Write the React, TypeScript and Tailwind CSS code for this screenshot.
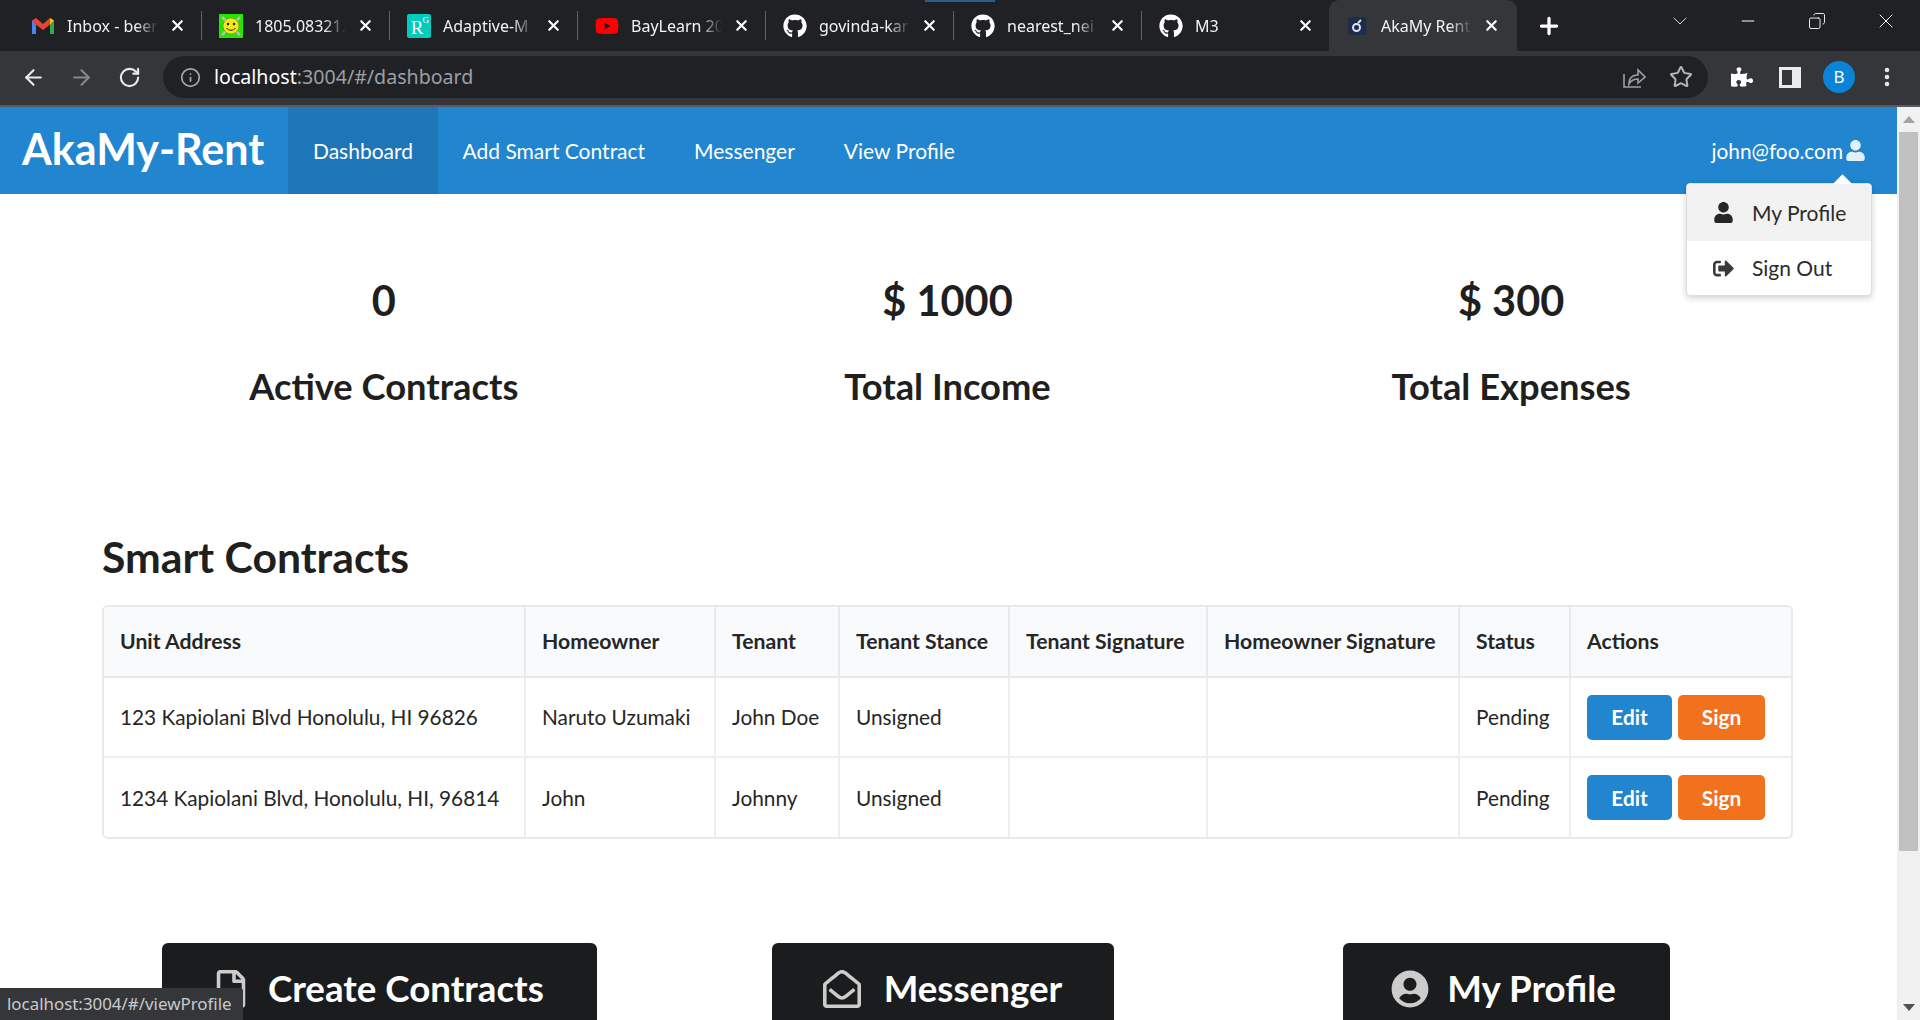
import React from "react";
import { ArrowLeft, ArrowRight, RotateCw, Info, Star, X, Plus, ChevronDown, Minus, Copy, EllipsisVertical } from "lucide-react";
import { FaGithub, FaUser, FaPuzzlePiece, FaSignOutAlt, FaRegFile, FaRegEnvelopeOpen, FaUserCircle, FaYoutube } from "react-icons/fa";

const tabs = [
  { title: "Inbox - beer", icon: "gmail" },
  { title: "1805.08321.", icon: "smiley" },
  { title: "Adaptive-M", icon: "rg" },
  { title: "BayLearn 20", icon: "youtube" },
  { title: "govinda-kar", icon: "github" },
  { title: "nearest_nei", icon: "github" },
  { title: "M3", icon: "github" },
];

const rows = [
  { address: "123 Kapiolani Blvd Honolulu, HI 96826", owner: "Naruto Uzumaki", tenant: "John Doe" },
  { address: "1234 Kapiolani Blvd, Honolulu, HI, 96814", owner: "John", tenant: "Johnny" },
];

const headers = ["Unit Address", "Homeowner", "Tenant", "Tenant Stance", "Tenant Signature", "Homeowner Signature", "Status", "Actions"];

function Favicon({ type }: { type: string }) {
  if (type === "gmail") {
    return (
      <svg width="24" height="24" viewBox="0 0 24 24">
        <path d="M1 6v14h4V10z" fill="#4285f4" />
        <path d="M23 6v14h-4V10z" fill="#34a853" />
        <path d="M1 6.5 5 4l7 6 7-6 4 2.5-4 4-7 5.500-7-5.500z" fill="#ea4335" />
        <path d="M19 4l4 2.500-4 4z" fill="#fbbc04" />
      </svg>
    );
  }
  if (type === "smiley") {
    return (
      <svg width="24" height="24" viewBox="0 0 24 24">
        <rect width="24" height="24" fill="#22e600" />
        <path d="M3 3l18 18M21 3 3 21" stroke="#bbb" strokeWidth="2.500" />
        <circle cx="12" cy="12" r="8" fill="#f4e71d" stroke="#6b6b10" strokeWidth="0.500" />
        <circle cx="9" cy="10" r="1.200" fill="#222" />
        <circle cx="15" cy="10" r="1.200" fill="#222" />
        <path d="M7.500 14c2 3 7 3 9 0" fill="none" stroke="#222" strokeWidth="1" />
      </svg>
    );
  }
  if (type === "rg") {
    return (
      <div className="relative flex h-6 w-6 items-center justify-center rounded-[2px] bg-[#00ccbb] font-['Liberation_Serif',serif] text-[19px] leading-none text-white">
        <span className="mr-1 mt-1">R</span>
        <span className="absolute right-[2px] top-[2px] text-[9px]">G</span>
      </div>
    );
  }
  if (type === "youtube") return <FaYoutube className="text-[26px] text-[#f00]" />;
  if (type === "github") return <FaGithub className="text-[24px] text-white" />;
  return (
    <svg width="18" height="18" viewBox="0 0 18 18">
      <rect width="18" height="18" rx="2" fill="#1c2c4c" />
      <circle cx="8.500" cy="10.500" r="3.500" fill="none" stroke="#dfe4ee" strokeWidth="2" />
      <path d="M10 6l3-3" stroke="#dfe4ee" strokeWidth="2" />
    </svg>
  );
}

function Tab({ title, icon, active }: { title: string; icon: string; active?: boolean }) {
  return (
    <div className={active ? "relative flex h-[51px] w-[188px] shrink-0 items-center rounded-t-[10px] bg-[#35363a] pl-[16px] pr-[17px]" : "relative flex h-[51px] w-[187px] shrink-0 items-center pl-[17px] pr-[15px]"}>
      <div className="flex w-[24px] shrink-0 items-center justify-center">
        <Favicon type={icon} />
      </div>
      <span className="ml-[12px] min-w-0 flex-1 overflow-hidden whitespace-nowrap text-[16px] text-[#f1f3f4] [mask-image:linear-gradient(to_right,black_72%,transparent_96%)]">
        {title}
      </span>
      <X size={17} strokeWidth={3} className="ml-[7px] shrink-0 text-white" />
    </div>
  );
}

function TabSeparator() {
  return <div className="h-[29px] w-px shrink-0 bg-[#5f6368]" />;
}

function BrowserChrome() {
  return (
    <div className="relative shrink-0 font-['Noto_Sans',sans-serif]">
      <div className="absolute left-[925px] top-0 h-[2px] w-[70px] bg-[#2b5f8a]" />
      <div className="flex h-[51px] items-center bg-[#202124] pl-[14px]">
        {tabs.map((t, i) => (
          <React.Fragment key={i}>
            <Tab title={t.title} icon={t.icon} />
            {i < 6 && <TabSeparator />}
          </React.Fragment>
        ))}
        <Tab title="AkaMy Rent" icon="aka" active />
        <Plus size={26} strokeWidth={3} className="ml-[19px] shrink-0 text-white" />
        <div className="flex-1" />
        <ChevronDown size={24} strokeWidth={1} className="mr-[46px] -mt-[10px] shrink-0 text-[#d6d6d6]" />
        <Minus size={20} strokeWidth={1.200} className="mr-[50px] -mt-[10px] shrink-0 text-white" />
        <Copy size={18} strokeWidth={1.200} className="mr-[48px] -mt-[10px] shrink-0 -scale-x-100 text-white" />
        <X size={24} strokeWidth={1} className="mr-[22px] -mt-[10px] shrink-0 text-white" />
      </div>
      <div className="flex h-[56px] items-center border-b-2 border-[#5a5b5e] bg-[#35363a] pb-[2px]">
        <ArrowLeft size={25} strokeWidth={2} className="ml-[21px] shrink-0 text-[#e8eaed]" />
        <ArrowRight size={25} strokeWidth={2} className="ml-[23px] shrink-0 text-[#85888c]" />
        <RotateCw size={23} strokeWidth={2.200} className="ml-[24px] shrink-0 text-[#e8eaed]" />
        <div className="ml-[22px] flex h-[42px] flex-1 items-center rounded-full bg-[#202124] pl-[17px] pr-[15px]">
          <Info size={21} strokeWidth={2} className="shrink-0 text-[#a5a7aa]" />
          <span className="ml-[13px] text-[19.600px] text-white">
            localhost<span className="text-[#9aa0a6]">:3004/#/dashboard</span>
          </span>
          <div className="flex-1" />
          <svg width="24" height="26" viewBox="0 0 24 26" fill="none" stroke="#9aa0a6" strokeWidth="1.600" className="mr-[23px]">
            <path d="M2 10v13h17" />
            <path d="M7 20c0-6 3-9 9-9V6l7 7-7 6v-4c-4 0-7 1.500-9 5z" />
          </svg>
          <Star size={24} strokeWidth={2} className="text-[#b3b5b8]" />
        </div>
        <FaPuzzlePiece className="ml-[23px] shrink-0 text-[22px] text-white" />
        <div className="ml-[26px] flex h-[21px] w-[22px] shrink-0 justify-end border-[3px] border-[#e8eaed]">
          <div className="w-[6px] bg-[#e8eaed]" />
        </div>
        <div className="ml-[22px] flex h-[32px] w-[32px] shrink-0 items-center justify-center rounded-full bg-[#0a84d6] text-[17px] text-white">B</div>
        <EllipsisVertical size={24} strokeWidth={2.500} className="ml-[20px] mr-[21px] shrink-0 text-[#e8eaed]" />
      </div>
    </div>
  );
}

function Navbar() {
  return (
    <div className="flex h-[87px] shrink-0 items-stretch bg-[#2185d0] text-[21px] text-white">
      <div className="flex w-[288px] items-center pb-[2px] pl-[22px] text-[43px] font-bold">AkaMy-Rent</div>
      <div className="flex w-[150px] items-center justify-center bg-[#1e75b8]">Dashboard</div>
      <div className="flex items-center px-[24.500px]">Add Smart Contract</div>
      <div className="flex items-center px-[24.500px]">Messenger</div>
      <div className="flex items-center px-[24.500px]">View Profile</div>
      <div className="flex flex-1 items-center justify-end pr-[31px] text-[20.800px]">
        john@foo.com
        <FaUser className="ml-[2px] text-[21px] text-[#e4f1fa]" />
      </div>
    </div>
  );
}

function ProfileMenu() {
  return (
    <div className="absolute right-[25px] top-[76px] w-[186px] rounded-[4px] border border-[#dedede] bg-white text-[21px] text-[#2b2b2b] shadow-[0_2px_6px_rgba(0,0,0,0.18)]">
      <div className="absolute right-[22px] top-[-7px] h-[13px] w-[13px] rotate-45 bg-white" />
      <div className="relative flex h-[57px] items-center rounded-t-[4px] bg-[#f2f2f2] pl-[26px]">
        <FaUser className="mr-[18px] text-[21px] text-[#262626]" />
        My Profile
      </div>
      <div className="flex h-[54px] items-center pl-[26px]">
        <FaSignOutAlt className="mr-[18px] text-[21px] text-[#3a3a3a]" />
        Sign Out
      </div>
    </div>
  );
}

function Stat({ value, label }: { value: string; label: string }) {
  return (
    <div className="text-center text-[#1f1f1f]">
      <div className="text-[41.500px] font-bold leading-[50px]">{value}</div>
      <div className="mt-[36px] text-[36.300px] font-bold leading-[50px]">{label}</div>
    </div>
  );
}

function ContractsTable() {
  return (
    <div className="mt-[23px] overflow-hidden rounded-[6px] border-2 border-[#e8e9e9]">
      <table className="w-full table-fixed border-collapse text-left text-[20.800px] text-[#262626]">
        <colgroup>
          <col className="w-[421px]" />
          <col className="w-[190px]" />
          <col className="w-[124px]" />
          <col className="w-[170px]" />
          <col className="w-[198px]" />
          <col className="w-[252px]" />
          <col className="w-[111px]" />
          <col />
        </colgroup>
        <thead>
          <tr className="h-[70px] bg-[#f9fafb]">
            {headers.map((h) => (
              <th key={h} className="border-b-2 border-l-2 border-[#e8e9e9] pl-[16px] text-[21.200px] font-bold whitespace-nowrap first:border-l-0">
                {h}
              </th>
            ))}
          </tr>
        </thead>
        <tbody>
          {rows.map((r) => (
            <tr key={r.address} className="h-[80px] border-b-2 border-[#eeeeee] last:border-b-0">
              <td className="pl-[16px] whitespace-nowrap">{r.address}</td>
              <td className="border-l-2 border-[#eeeeee] pl-[16px] whitespace-nowrap">{r.owner}</td>
              <td className="border-l-2 border-[#eeeeee] pl-[16px] whitespace-nowrap">{r.tenant}</td>
              <td className="border-l-2 border-[#eeeeee] pl-[16px]">Unsigned</td>
              <td className="border-l-2 border-[#eeeeee]" />
              <td className="border-l-2 border-[#eeeeee]" />
              <td className="border-l-2 border-[#eeeeee] pl-[16px]">Pending</td>
              <td className="border-l-2 border-[#eeeeee] pl-[16px]">
                <div className="flex gap-[6px]">
                  <button className="h-[45px] w-[85px] rounded-[5px] bg-[#2185d0] font-bold text-white">Edit</button>
                  <button className="h-[45px] w-[87px] rounded-[5px] bg-[#f2711c] font-bold text-white">Sign</button>
                </div>
              </td>
            </tr>
          ))}
        </tbody>
      </table>
    </div>
  );
}

function BigButton({ icon, label, className, iconClass }: { icon: React.ReactNode; label: string; className: string; iconClass: string }) {
  return (
    <div className={`flex h-[92px] items-center rounded-t-[6px] bg-[#1b1c1d] text-[36.700px] font-bold whitespace-nowrap text-white ${className}`}>
      <span className={`text-[38px] text-[#cccccc] ${iconClass}`}>{icon}</span>
      {label}
    </div>
  );
}

function Scrollbar() {
  return (
    <div className="flex w-[23px] shrink-0 flex-col items-center bg-[#f1f1f1]">
      <div className="flex h-[25px] items-center justify-center">
        <div className="h-0 w-0 border-x-[6px] border-b-[7px] border-x-transparent border-b-[#a3a3a3]" />
      </div>
      <div className="h-[719px] w-[19px] bg-[#c1c1c1]" />
      <div className="flex-1" />
      <div className="flex h-[25px] items-center justify-center">
        <div className="h-0 w-0 border-x-[6px] border-t-[7px] border-x-transparent border-t-[#505050]" />
      </div>
    </div>
  );
}

export default function App() {
  return (
    <div className="relative flex h-[1020px] w-[1920px] flex-col overflow-hidden bg-white font-['Lato',sans-serif]">
      <BrowserChrome />
      <div className="flex min-h-0 flex-1">
        <div className="relative min-w-0 flex-1 overflow-hidden">
          <Navbar />
          <ProfileMenu />
          <div className="pl-[102px] pr-[104px] pt-[81px]">
            <div className="grid grid-cols-3">
              <Stat value="0" label="Active Contracts" />
              <Stat value="$ 1000" label="Total Income" />
              <Stat value="$ 300" label="Total Expenses" />
            </div>
            <h2 className="mt-[121px] text-[42.700px] font-bold leading-[50px] text-[#1f1f1f]">Smart Contracts</h2>
            <ContractsTable />
            <div className="mt-[104px] grid grid-cols-3">
              <BigButton icon={<FaRegFile />} label="Create Contracts" className="ml-[60px] w-[435px] pl-[50px]" iconClass="mr-[18px]" />
              <BigButton icon={<FaRegEnvelopeOpen />} label="Messenger" className="ml-[106px] w-[342px] pl-[51px]" iconClass="mr-[23px]" />
              <BigButton icon={<FaUserCircle />} label="My Profile" className="ml-[114px] w-[327px] pl-[48px]" iconClass="mr-[18px]" />
            </div>
          </div>
        </div>
        <Scrollbar />
      </div>
      <div className="absolute bottom-0 left-0 flex h-[32px] w-[243px] items-center rounded-tr-[3px] bg-[#35363a] pl-[7px] font-['Noto_Sans',sans-serif] text-[16.900px] whitespace-nowrap text-[#c8cacc]">
        localhost:3004/#/viewProfile
      </div>
    </div>
  );
}
